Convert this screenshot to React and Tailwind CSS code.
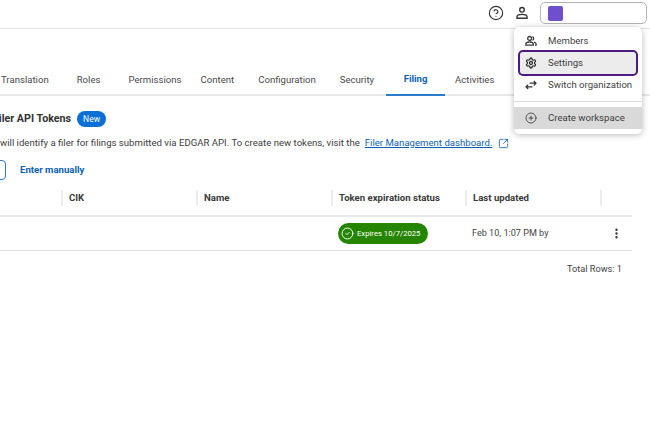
import { CircleHelp, Settings, CirclePlus, SquareArrowOutUpRight, EllipsisVertical, CircleCheck } from 'lucide-react';

const tabs = [
  { label: 'Translation', className: 'ml-[1px]' },
  { label: 'Roles', className: 'ml-[28px]' },
  { label: 'Permissions', className: 'ml-[28px]' },
  { label: 'Content', className: 'ml-[19px]' },
  { label: 'Configuration', className: 'ml-[24px]' },
  { label: 'Security', className: 'ml-[24px]' },
];

const columns = ['', 'CIK', 'Name', 'Token expiration status', 'Last updated', ''];

function PersonIcon() {
  return (
    <svg width="14" height="14" viewBox="0 0 14 14" fill="none" stroke="#333" strokeWidth="1.4" className="mr-[11px]">
      <circle cx="7" cy="3.8" r="2.3" />
      <path d="M2 12.2v-1.4c0-1.5 2.1-2.4 5-2.4s5 .9 5 2.4v1.4z" />
    </svg>
  );
}

function MembersIcon() {
  return (
    <svg width="12" height="12" viewBox="0 0 12 12" fill="none" stroke="#3a3a3a" strokeWidth="1.3">
      <circle cx="4.6" cy="3.4" r="1.9" />
      <path d="M.9 10.2V9c0-1.2 1.6-2 3.7-2s3.7.8 3.7 2v1.2z" />
      <path d="M7.4 1.6a1.9 1.9 0 0 1 0 3.6M9 7.2c1.2.3 2.1 1 2.1 1.9v1.1H10" />
    </svg>
  );
}

function SwitchIcon() {
  return (
    <svg width="12" height="12" viewBox="0 0 12 12" fill="none" stroke="#333" strokeWidth="1.2">
      <path d="M4.6 4.2h6.4M8.8 2l2.2 2.2-2.2 2.2" />
      <path d="M7.4 7.8H1M3.2 5.6 1 7.8 3.2 10" />
    </svg>
  );
}

function MenuItem({ icon, label, className = 'pl-[11px]' }) {
  return (
    <div className={`flex items-center gap-[11px] h-[22px] text-[#3f3f3f] ${className}`}>
      {icon}
      <span className="pt-[1px]">{label}</span>
    </div>
  );
}

export default function App() {
  return (
    <div className="relative w-[650px] h-[423px] overflow-hidden bg-white text-[9.6px] text-[#3d3d3d] font-['Roboto',sans-serif]">
      {/* Header */}
      <div className="flex items-center justify-end h-[29px] border-b border-[#e4e4e4] pr-[3px] pb-[2px]">
        <CircleHelp size={16} strokeWidth={1.7} className="text-[#333] mr-[11px]" />
        <PersonIcon />
        <div className="flex items-center w-[107px] h-[22px] pl-[7px] border border-[#b5b5b5] rounded-[5px]">
          <div className="w-[15px] h-[15px] rounded-[2px] bg-[#6f4fcb]" />
        </div>
      </div>

      {/* Tabs */}
      <div className="flex items-center h-[67px] pt-[35px] border-b-2 border-[#e8e8e8]">
        {tabs.map((t) => (
          <span key={t.label} className={`${t.className} pt-[2px] text-[#4a4a4a]`}>{t.label}</span>
        ))}
        <div className="ml-[12px] w-[59px] h-[32px] flex items-center justify-center font-bold text-[#0b62b5] border-b-2 border-[#2b7cc9] mb-[-2px]">
          Filing
        </div>
        <span className="ml-[10px] pt-[2px] text-[#4a4a4a]">Activities</span>
      </div>

      {/* Filer tokens */}
      <div className="flex items-center mt-[15px] h-[16px]">
        <h2 className="text-[10.7px] font-bold text-[#333] ml-[-7px]">Filer API Tokens</h2>
        <span className="ml-[6px] flex items-center justify-center w-[29px] h-[16px] rounded-full bg-[#0a70d8] text-white text-[8.5px]">New</span>
      </div>
      <div className="flex items-center mt-[8px] h-[16px] whitespace-nowrap text-[#3d3d3d]">
        <span>will identify a filer for filings submitted via EDGAR API. To create new tokens, visit the</span>
        <span className="ml-[5px] text-[#0b62b5] underline">Filer Management dashboard.</span>
        <SquareArrowOutUpRight size={11} strokeWidth={1.8} className="ml-[6px] text-[#0b62b5]" />
      </div>
      <div className="flex items-center mt-[9px] h-[20px]">
        <div className="w-[20px] h-[20px] ml-[-14px] rounded-[4px] border border-[#2b7cc9]" />
        <span className="ml-[14px] font-bold text-[#0b62b5]">Enter manually</span>
      </div>

      {/* Table */}
      <div className="w-[632px] mt-[10px]">
        <div className="grid grid-cols-[61px_135px_135px_134px_135px_32px] h-[27px] items-start border-b-2 border-[#e8e8e8] font-bold text-[#3a3a3a]">
          {columns.map((c, i) => (
            <div key={i} className={`h-[16px] flex items-center pl-[6px] ${i > 0 ? 'border-l-2 border-[#ececec]' : ''}`}>{c}</div>
          ))}
        </div>
        <div className="grid grid-cols-[61px_135px_135px_134px_135px_32px] h-[34px] items-center border-b border-[#e2e2e2]">
          <div />
          <div />
          <div />
          <div className="pl-[7px]">
            <span className="flex items-center gap-[3px] w-[90px] h-[21px] pl-[3px] rounded-full bg-[#268500] text-white text-[7.7px] whitespace-nowrap">
              <CircleCheck size={13} strokeWidth={1.8} />
              Expires 10/7/2025
            </span>
          </div>
          <div className="pl-[7px] text-[9.1px] text-[#444]">Feb 10, 1:07 PM by</div>
          <div className="flex justify-center"><EllipsisVertical size={13} strokeWidth={2.4} className="text-[#333]" /></div>
        </div>
        <div className="mt-[11px] pr-[10px] text-right text-[9.2px] text-[#444]">Total Rows: 1</div>
      </div>

      {/* Account menu */}
      <div className="absolute left-[514px] top-[27px] w-[128px] h-[107px] pt-[3px] bg-white rounded-[5px] shadow-[0_1px_6px_rgba(0,0,0,0.28)] overflow-hidden">
        <MenuItem icon={<MembersIcon />} label="Members" />
        <MenuItem
          icon={<Settings size={12} strokeWidth={2.6} className="text-[#333]" />}
          label="Settings"
          className="bg-[#ececec] outline-2 outline-[#4d1a80] rounded-[3px] mx-[6px] pl-[5px]"
        />
        <MenuItem icon={<SwitchIcon />} label="Switch organization" />
        <div className="mt-[5px] border-t border-[#dcdcdc]" />
        <MenuItem icon={<CirclePlus size={12} strokeWidth={1.6} className="text-[#333]" />} label="Create workspace" className="mt-[5px] bg-[#d9d9d9] pl-[11px]" />
      </div>
    </div>
  );
}
